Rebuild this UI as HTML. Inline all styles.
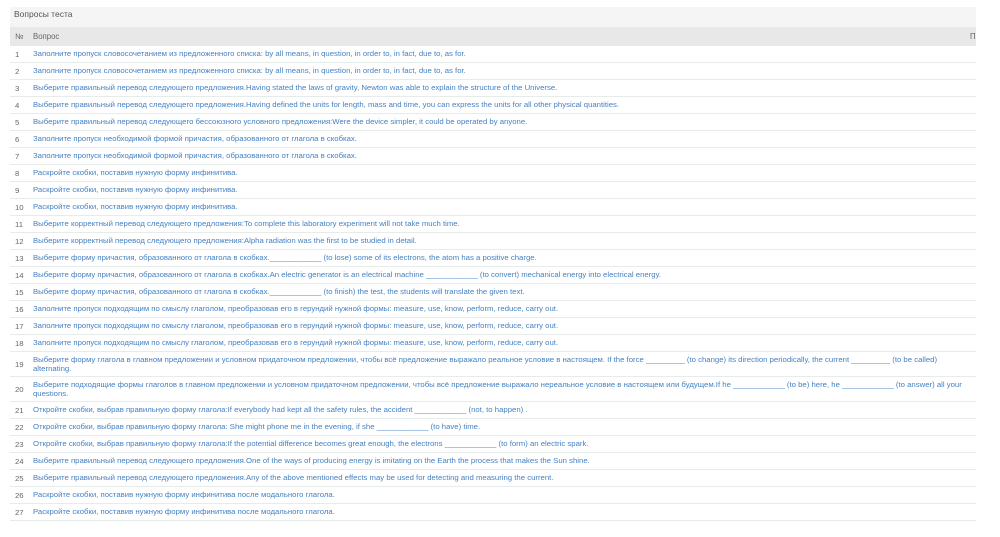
<!DOCTYPE html><html><head><meta charset="utf-8"><style>
body{margin:0;background:#fff;font-family:"Liberation Sans","DejaVu Sans",sans-serif;}
.p{position:absolute;left:10px;top:7px;width:966px;}
.h{height:20px;background:#f5f5f5;font-size:8.5px;color:#555;line-height:15px;padding-left:4px;box-sizing:border-box}
.th{height:19px;background:#e8e8e8;font-size:7.8px;color:#666;line-height:19px;position:relative}
.th span{position:absolute}
.r{display:flex;border-bottom:1px solid #e6ecea;box-sizing:border-box;height:17px;align-items:center;font-size:7.75px}
.r .n{width:23px;padding-left:5px;box-sizing:border-box;color:#666;flex:none}
.r .t{color:#4581c2;width:935px;line-height:9.5px}
.r.d{height:25px}
</style></head><body><div class="p">
<div class="h">Вопросы теста</div>
<div class="th"><span style="left:5px">№</span><span style="left:23px">Вопрос</span><span style="left:960px">П</span></div>
<div class="r"><div class="n">1</div><div class="t">Заполните пропуск словосочетанием из предложенного списка: by all means, in question, in order to, in fact, due to, as for.</div></div>
<div class="r"><div class="n">2</div><div class="t">Заполните пропуск словосочетанием из предложенного списка: by all means, in question, in order to, in fact, due to, as for.</div></div>
<div class="r"><div class="n">3</div><div class="t">Выберите правильный перевод следующего предложения.Having stated the laws of gravity, Newton was able to explain the structure of the Universe.</div></div>
<div class="r"><div class="n">4</div><div class="t">Выберите правильный перевод следующего предложения.Having defined the units for length, mass and time, you can express the units for all other physical quantities.</div></div>
<div class="r"><div class="n">5</div><div class="t">Выберите правильный перевод следующего бессоюзного условного предложения:Were the device simpler, it could be operated by anyone.</div></div>
<div class="r"><div class="n">6</div><div class="t">Заполните пропуск необходимой формой причастия, образованного от глагола в скобках.</div></div>
<div class="r"><div class="n">7</div><div class="t">Заполните пропуск необходимой формой причастия, образованного от глагола в скобках.</div></div>
<div class="r"><div class="n">8</div><div class="t">Раскройте скобки, поставив нужную форму инфинитива.</div></div>
<div class="r"><div class="n">9</div><div class="t">Раскройте скобки, поставив нужную форму инфинитива.</div></div>
<div class="r"><div class="n">10</div><div class="t">Раскройте скобки, поставив нужную форму инфинитива.</div></div>
<div class="r"><div class="n">11</div><div class="t">Выберите корректный перевод следующего предложения:To complete this laboratory experiment will not take much time.</div></div>
<div class="r"><div class="n">12</div><div class="t">Выберите корректный перевод следующего предложения:Alpha radiation was the first to be studied in detail.</div></div>
<div class="r"><div class="n">13</div><div class="t">Выберите форму причастия, образованного от глагола в скобках.____________ (to lose) some of its electrons, the atom has a positive charge.</div></div>
<div class="r"><div class="n">14</div><div class="t">Выберите форму причастия, образованного от глагола в скобках.An electric generator is an electrical machine ____________ (to convert) mechanical energy into electrical energy.</div></div>
<div class="r"><div class="n">15</div><div class="t">Выберите форму причастия, образованного от глагола в скобках.____________ (to finish) the test, the students will translate the given text.</div></div>
<div class="r"><div class="n">16</div><div class="t">Заполните пропуск подходящим по смыслу глаголом, преобразовав его в герундий нужной формы: measure, use, know, perform, reduce, carry out.</div></div>
<div class="r"><div class="n">17</div><div class="t">Заполните пропуск подходящим по смыслу глаголом, преобразовав его в герундий нужной формы: measure, use, know, perform, reduce, carry out.</div></div>
<div class="r"><div class="n">18</div><div class="t">Заполните пропуск подходящим по смыслу глаголом, преобразовав его в герундий нужной формы: measure, use, know, perform, reduce, carry out.</div></div>
<div class="r d"><div class="n">19</div><div class="t">Выберите форму глагола в главном предложении и условном придаточном предложении, чтобы всё предложение выражало реальное условие в настоящем. If the force _________ (to change) its direction periodically, the current _________ (to be called) alternating.</div></div>
<div class="r d"><div class="n">20</div><div class="t">Выберите подходящие формы глаголов в главном предложении и условном придаточном предложении, чтобы всё предложение выражало нереальное условие в настоящем или будущем.If he ____________ (to be) here, he ____________ (to answer) all your questions.</div></div>
<div class="r"><div class="n">21</div><div class="t">Откройте скобки, выбрав правильную форму глагола:If everybody had kept all the safety rules, the accident ____________ (not, to happen) .</div></div>
<div class="r"><div class="n">22</div><div class="t">Откройте скобки, выбрав правильную форму глагола: She might phone me in the evening, if she ____________ (to have) time.</div></div>
<div class="r"><div class="n">23</div><div class="t">Откройте скобки, выбрав правильную форму глагола:If the potential difference becomes great enough, the electrons ____________ (to form) an electric spark.</div></div>
<div class="r"><div class="n">24</div><div class="t">Выберите правильный перевод следующего предложения.One of the ways of producing energy is imitating on the Earth the process that makes the Sun shine.</div></div>
<div class="r"><div class="n">25</div><div class="t">Выберите правильный перевод следующего предложения.Any of the above mentioned effects may be used for detecting and measuring the current.</div></div>
<div class="r"><div class="n">26</div><div class="t">Раскройте скобки, поставив нужную форму инфинитива после модального глагола.</div></div>
<div class="r"><div class="n">27</div><div class="t">Раскройте скобки, поставив нужную форму инфинитива после модального глагола.</div></div>
</div></body></html>
